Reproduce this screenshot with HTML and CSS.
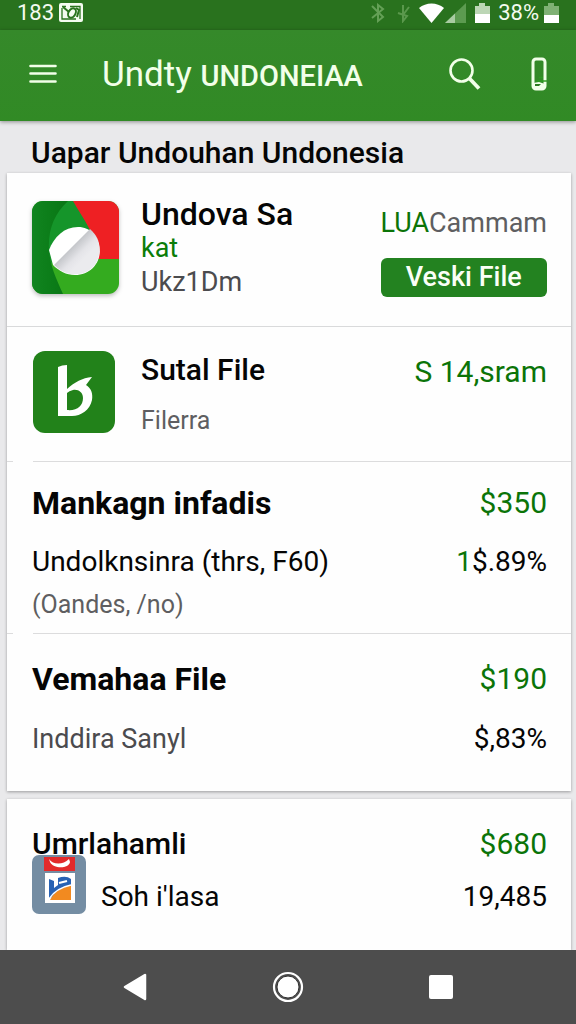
FILE: index.html
```html
<!DOCTYPE html>
<html lang="id">
<head>
<meta charset="utf-8">
<meta name="viewport" content="width=device-width, initial-scale=1">
<title>Undty UNDONEIAA</title>
<link rel="stylesheet" href="styles.css">
</head>
<body>
<div class="status">
  <span class="status-text">183</span>
  <svg class="status-shot" width="24" height="20" viewBox="0 0 24 20"><rect width="24" height="19" rx="2" fill="#f4fbf0"/><path d="M3 3.500h4M3 5v11h14M21 16V3.500H11" fill="none" stroke="#2a731e" stroke-width="1.300"/><ellipse cx="13" cy="10" rx="3.500" ry="5" fill="none" stroke="#2a731e" stroke-width="2" transform="rotate(30 13 10)"/><path d="M4 4l6 5M17 5l3 2-2 7" stroke="#2a731e" stroke-width="2" fill="none"/></svg>
  <span class="spacer"></span>
  <svg class="status-bt" width="14" height="20" viewBox="0 0 14 20"><path d="M1 3l11 11-5 4V2l5 4L1 15" fill="none" stroke="#64a056" stroke-width="2"/></svg>
  <svg class="status-bt status-bt-last" width="14" height="20" viewBox="0 0 14 20"><path d="M1 10l9 3-4 5V2M12 4l-6 8" fill="none" stroke="#5a984c" stroke-width="2"/></svg>
  <svg width="25" height="20" viewBox="0 0 25 20"><path d="M0 5C7-1 18-1 25 5L12.500 20z" fill="#fff"/></svg>
  <svg class="status-signal" width="22" height="20" viewBox="0 0 22 20"><path d="M0 20L21 0v20z" fill="#5c9b50"/><path d="M0 20L10 10.500V20z" fill="#a9cba2"/></svg>
  <svg class="status-cell" width="15" height="20" viewBox="0 0 15 20"><path d="M0 3h4V0h6v3h5v8H0z" fill="#bcd6b5"/><path d="M0 11h15v9H0z" fill="#fff"/></svg>
  <span class="status-text">38%</span>
  <svg width="15" height="20" viewBox="0 0 15 20"><path d="M0 3h4V0h6v3h5v9H0z" fill="#7fb174"/><path d="M0 12h15v8H0z" fill="#fff"/></svg>
</div>
<header class="appbar">
  <button class="icon-button" aria-label="Menu"><svg width="28" height="20" viewBox="0 0 28 20"><path d="M1.500 2h25M1.500 9.500h25M1.500 17.500h25" stroke="#f2ffe9" stroke-width="2.600" stroke-linecap="round"/></svg></button>
  <h1 class="appbar-title">Undty <span class="appbar-caps">UNDONEIAA</span></h1>
  <button class="icon-button" aria-label="Search"><svg width="32" height="32" viewBox="0 0 32 32"><circle cx="12.500" cy="12.500" r="11" fill="none" stroke="#f2ffe9" stroke-width="2.600"/><path d="M20 20L30 30.500" stroke="#f2ffe9" stroke-width="3.800"/></svg></button>
  <button class="icon-button" aria-label="Device"><svg width="16" height="34" viewBox="0 0 16 34"><rect x="2" y="2" width="12" height="30" rx="3" fill="none" stroke="#f2ffe9" stroke-width="3"/><path d="M2 26l6-1 6 2v3q-6 4-12 0z" fill="#f2ffe9"/><path d="M4 27h6l-2 2H4z" fill="#2c7a20"/><path d="M8 20.500h4M5 24h11" stroke="#2f9a22" stroke-width="1.500"/></svg></button>
</header>
<main class="content">
  <h2 class="section-title">Uapar Undouhan Undonesia</h2>
  <section class="card">
    <article class="row row-full">
      <svg class="app-icon" width="87" height="94" viewBox="0 0 87 94">
        <defs>
          <clipPath id="tile"><rect width="87" height="93" rx="11"/></clipPath>
          <linearGradient id="leaf" x1="0" y1="0" x2="1" y2="0"><stop offset="0" stop-color="#118420"/><stop offset=".6" stop-color="#0b7c18"/><stop offset="1" stop-color="#0a7415"/></linearGradient>
          <linearGradient id="paper" x1="40" y1="46" x2="52" y2="58" gradientUnits="userSpaceOnUse"><stop offset="0" stop-color="#c4c6ca"/><stop offset=".6" stop-color="#e4e4e8"/><stop offset="1" stop-color="#ebebee"/></linearGradient>
        </defs>
        <g clip-path="url(#tile)">
          <rect width="87" height="93" fill="#34ab1f"/>
          <path d="M40 0h47v58H60z" fill="#ee2023"/>
          <path d="M34 0h7c5 9 11 17 17 29L20 63 14 50C16 30 22 12 34 0z" fill="#15952a"/>
          <path d="M36 0C22 13 16 29 17 48c1 17 7 29 14 45H0V0z" fill="url(#leaf)"/>
        </g>
        <path d="M17 49C22 36 32 26 46 26c13 0 19 10 21 18 4 16-8 30-24 30-9 0-16-4-22-10z" fill="#fff"/>
        <path d="M58 28C66 35 69 44 67 54 64 69 51 75 38 73q-9-2-16-9z" fill="url(#paper)"/>
      </svg>
      <div class="row-text">
        <h3 class="name">Undova Sa</h3>
        <p class="tag">kat</p>
        <p class="meta">Ukz1Dm</p>
      </div>
      <div class="row-action">
        <p class="lead"><span class="green">LUA</span>Cammam</p>
        <button class="install">Veski File</button>
      </div>
    </article>
    <article class="row row-inset row-short">
      <svg class="app-icon" width="87" height="82" viewBox="0 0 87 82"><rect x="1" width="82" height="82" rx="12" fill="#22821a"/><path d="M26 16q4-2 9-2v24c8-7 15-11 25-12l-6 8c5 3 7 8 6 15-2 10-11 16-20 16H26zM35 42v17c10 1 16-4 16-12 0-6-5-9-10-8q-4 1-6 3z" fill="#fff" fill-rule="evenodd"/></svg>
      <div class="row-text row-text-spaced">
        <h3 class="name name-small">Sutal File</h3>
        <p class="caption">Filerra</p>
      </div>
      <p class="price row-price">S 14,sram</p>
    </article>
    <article class="row row-inset detail detail-long">
      <div class="line"><h3 class="name name-bold">Mankagn infadis</h3><p class="price">$350</p></div>
      <div class="line"><p class="body">Undolknsinra (thrs, F60)</p><p class="body"><span class="green">1</span>$.89%</p></div>
      <p class="caption">(Oandes, /no)</p>
    </article>
    <article class="row detail detail-short">
      <div class="line"><h3 class="name name-bold">Vemahaa File</h3><p class="price">$190</p></div>
      <div class="line"><p class="meta">Inddira Sanyl</p><p class="body">$,83%</p></div>
    </article>
  </section>
  <section class="card card-last">
    <article class="row detail detail-last">
      <div class="line"><h3 class="name name-small">Umrlahamli</h3><p class="price">$680</p></div>
      <div class="line line-icon">
        <svg width="54" height="59" viewBox="0 0 54 59"><rect width="54" height="59" rx="7" fill="#748da3"/><path d="M12 2h31v14H12z" fill="#e22a2b"/><path d="M17 4c4 6 14 6 20 0l1 3c-1 7-17 7-20 0z" fill="#fff"/><path d="M13 18h30v30H13z" fill="#fff"/><path d="M17 24l5 2v7l4-3V23q8-3 13 1v7L17 44z" fill="#2862b4"/><path d="M18 45q5-11 21-15v15z" fill="#f28a20"/><path d="M27 28l8-2" stroke="#fff" stroke-width="2"/><path d="M17 44q7-11 22-14" fill="none" stroke="#fff" stroke-width="1.500"/></svg>
        <p class="body body-grow">Soh i'lasa</p>
        <p class="body">19,485</p>
      </div>
    </article>
  </section>
</main>
<nav class="navbar">
  <button class="nav-button" aria-label="Back"><svg width="24" height="28" viewBox="0 0 24 28"><path d="M2 14L22 2v24z" fill="#fff" stroke="#fff" stroke-width="2.500" stroke-linejoin="round"/></svg></button>
  <button class="nav-button" aria-label="Home"><svg width="32" height="32" viewBox="0 0 32 32"><circle cx="16" cy="16" r="14" fill="none" stroke="#fff" stroke-width="2.200"/><circle cx="16" cy="16" r="11" fill="#fff" stroke="#303030"/></svg></button>
  <button class="nav-button" aria-label="Recent"><svg width="24" height="24" viewBox="0 0 24 24"><rect width="24" height="24" rx="2" fill="#fff"/></svg></button>
</nav>
</body>
</html>
```
FILE: styles.css
```css
* {
  box-sizing: border-box;
}

body {
  margin: 0;
  min-height: 100vh;
  display: flex;
  flex-direction: column;
  background: #e9e9eb;
  color: #050505;
  font-family: Roboto, "Noto Sans", sans-serif;
}

h1, h2, h3, p {
  margin: 0;
  font-weight: 400;
  white-space: nowrap;
}

button {
  border: 0;
  padding: 0;
  background: none;
  font-family: inherit;
  cursor: pointer;
}

svg {
  display: block;
  flex: none;
}

.spacer {
  flex: 1;
}

.status {
  display: flex;
  align-items: center;
  height: 30px;
  padding: 0 17px 4px;
  background: #29721e;
  color: #f4fbf0;
}

.status-text {
  font-size: 22px;
  line-height: 24px;
  margin-right: 5px;
}

.status-bt {
  margin-right: 12px;
}

.status-bt-last {
  margin-right: 8px;
}

.status-signal {
  margin-left: 1px;
}

.status-cell {
  margin: 0 8px;
}

.appbar {
  display: flex;
  align-items: center;
  height: 91px;
  padding: 0 29px 4px;
  background: linear-gradient(#35892a, #318a25);
  color: #f2ffe9;
  box-shadow: 0 1px 4px #00000066;
  z-index: 1;
}

.icon-button + .icon-button {
  margin-left: 50px;
}

.appbar-title {
  flex: 1;
  margin-left: 45px;
  padding-top: 3px;
  font-size: 35px;
  line-height: 40px;
}

.appbar-caps {
  font-size: 29px;
  font-weight: 500;
}

.content {
  flex: 1;
  display: flex;
  flex-direction: column;
  padding: 0 5px 0 7px;
}

.section-title {
  padding: 15px 24px 3px;
  font-size: 30px;
  font-weight: 500;
  line-height: 34px;
}

.card {
  margin-bottom: 8px;
  background: #fefefe;
  box-shadow: 0 1px 3px #00000055;
}

.card-last {
  flex: 1;
  margin-bottom: 0;
}

.row {
  display: flex;
  padding: 24px 24px 24px 25px;
  line-height: 34px;
}

.row-full {
  align-items: center;
  padding-bottom: 27px;
  border-bottom: 1px solid #d9dadb;
}

.row-inset {
  background: linear-gradient(to right, #dcdcdd 6px, transparent 6px 26px, #dcdcdd 26px) bottom / 100% 1px no-repeat;
}

.row-text {
  flex: 1;
  margin-left: 22px;
}

.row-text-spaced {
  display: grid;
  gap: 17px;
  padding-top: 2px;
}

.row-price {
  padding-top: 4px;
}

.app-icon {
  align-self: center;
}

.row-short .app-icon {
  align-self: flex-start;
}

.row-full .app-icon {
  filter: drop-shadow(0 2px 2px #00000040);
}

.row-action {
  display: grid;
  gap: 18px;
  padding-top: 6px;
}

.install {
  height: 39px;
  border-radius: 6px;
  background: #238220;
  color: #fafff7;
  font-size: 27px;
  font-weight: 500;
}

.name {
  font-size: 32px;
  font-weight: 500;
}

.name-bold {
  font-weight: 700;
}

.name-small {
  font-size: 30px;
}

.tag {
  color: #0b7d08;
  font-size: 27px;
}

.meta {
  color: #4b4b4e;
  font-size: 27px;
}

.lead {
  color: #5e5e61;
  font-size: 27px;
}

.caption {
  color: #5e5e61;
  font-size: 25px;
}

.body {
  font-size: 28px;
}

.price {
  color: #0b7408;
  font-size: 30px;
}

.green {
  color: #0b7408;
}

.line {
  display: flex;
  justify-content: space-between;
}

.detail {
  flex-direction: column;
}

.detail-long {
  gap: 9px;
  padding-bottom: 12px;
}

.detail-long .line:first-child {
  margin-bottom: 16px;
}

.detail-short {
  gap: 26px;
  padding-top: 28px;
  padding-bottom: 35px;
}

.detail-last {
  padding-top: 28px;
}

.line-icon {
  align-items: flex-end;
  gap: 15px;
  margin-top: -6px;
}

.body-grow {
  flex: 1;
}

.navbar {
  display: flex;
  align-items: center;
  justify-content: center;
  gap: 125px;
  height: 74px;
  background: #4d4d4d;
  z-index: 1;
}
```
